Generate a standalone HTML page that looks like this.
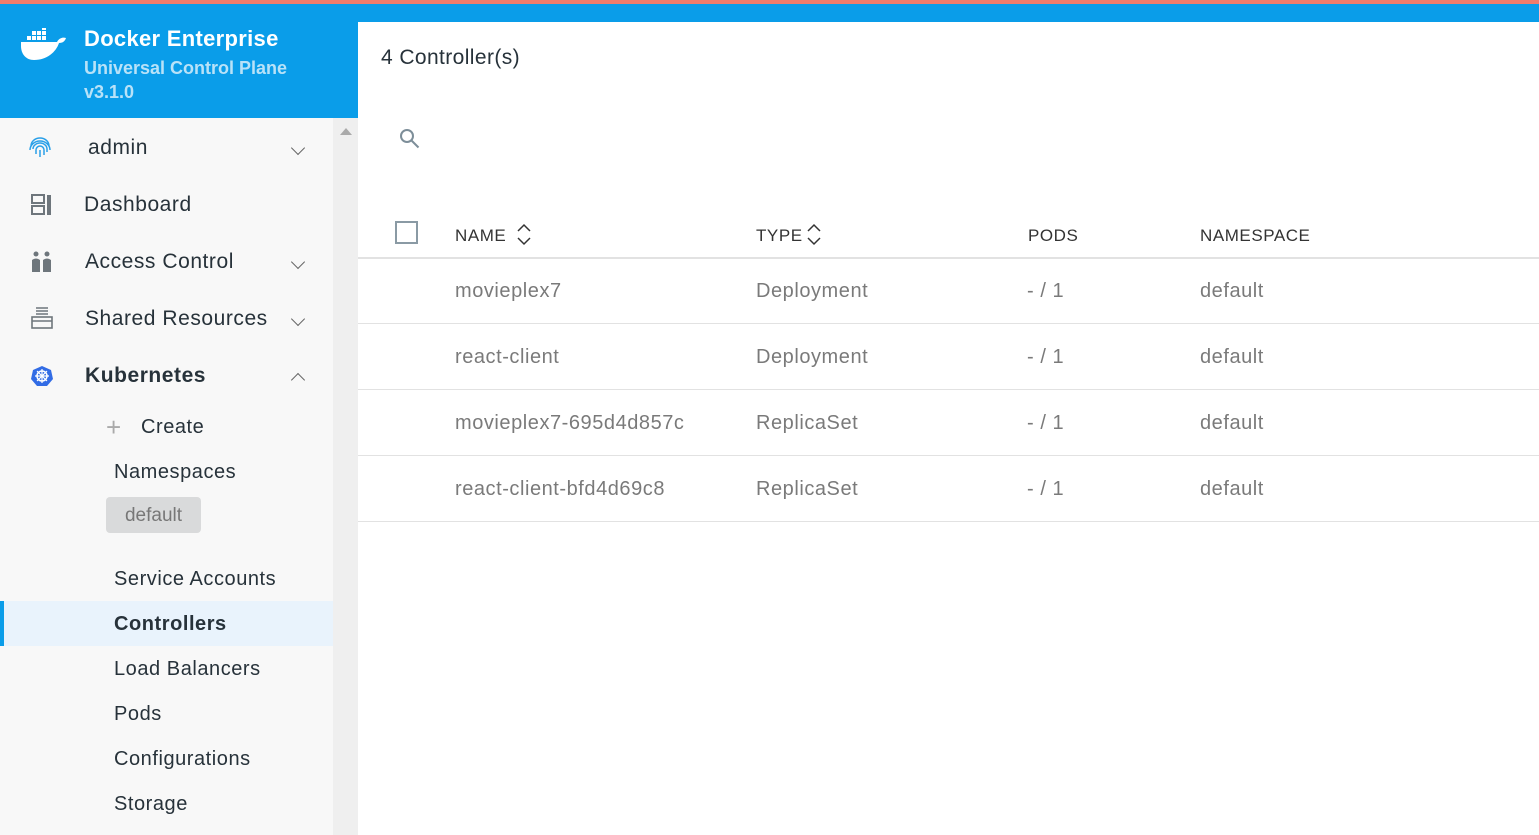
<!DOCTYPE html>
<html><head><meta charset="utf-8"><style>
*{margin:0;padding:0;box-sizing:border-box}
body{width:1539px;height:835px;overflow:hidden;background:#fff;font-family:"Liberation Sans","DejaVu Sans",sans-serif;position:relative;color:#27323a}
.a{position:absolute;white-space:nowrap}
.nav,.sub,.td,.th{margin-top:2px;letter-spacing:.55px}
.nav{font-size:21px;color:#27323a}
.sub{font-size:20px;color:#27323a}
.chev{position:absolute;width:10px;height:10px;border-right:1.5px solid #666;border-bottom:1.5px solid #666;transform:rotate(45deg)}
.th{font-size:17px;color:#333;top:224px}
.td{font-size:20px;color:#7a7a7a}
.row{position:absolute;left:358px;right:0;height:1px;background:#e2e2e2}
</style></head><body>
<div class="a" style="left:0;top:0;width:1539px;height:4px;background:#f07c6c"></div>
<div class="a" style="left:0;top:4px;width:1539px;height:18px;background:#0a9de9"></div>
<div class="a" style="left:0;top:4px;width:358px;height:114px;background:#0a9de9"></div>
<svg class="a" style="left:20px;top:28px" width="48" height="34" viewBox="0 0 48 34"><g fill="#fff"><rect x="7" y="8" width="4" height="4"/><rect x="12" y="8" width="4" height="4"/><rect x="17" y="8" width="4" height="4"/><rect x="22" y="8" width="4" height="4"/><rect x="12" y="3" width="4" height="4"/><rect x="17" y="3" width="4" height="4"/><rect x="22" y="3" width="4" height="4"/><rect x="22" y="0" width="4" height="2"/><path d="M1 14h36c2-4 6-5 9-4-1 3-3 5-7 5-3 9-12 17-25 17C6 32 1 26 1 18z"/></g></svg>
<div class="a" style="left:84px;top:26px;font-size:22px;font-weight:bold;color:#fff;letter-spacing:.3px">Docker Enterprise</div>
<div class="a" style="left:84px;top:58px;font-size:18px;font-weight:bold;color:#b8e2f8">Universal Control Plane</div>
<div class="a" style="left:84px;top:82px;font-size:18px;font-weight:bold;color:#b8e2f8">v3.1.0</div>
<div class="a" style="left:0;top:118px;width:333px;height:717px;background:#f8f8f8"></div>
<div class="a" style="left:333px;top:118px;width:25px;height:717px;background:#efefef"></div>
<div class="a" style="left:340px;top:128px;width:0;height:0;border-left:6px solid transparent;border-right:6px solid transparent;border-bottom:7px solid #aaa"></div>
<svg class="a" style="left:28px;top:137px" width="24" height="22" viewBox="0 0 24 22" fill="none" stroke="#2aa0e8" stroke-width="1.5"><path d="M3 9a9 8 0 0118 0M5 12a7 6 0 0114 0v3M8 17v-4a4 4 0 018 0v5M12 13v7M2 13a10 9 0 0120 0"/></svg>
<svg class="a" style="left:31px;top:194px" width="22" height="22" viewBox="0 0 22 22" fill="none" stroke="#6e767c" stroke-width="2"><rect x="1" y="1" width="12" height="8"/><rect x="1" y="12" width="12" height="8"/><path d="M18 1v20" stroke-width="4"/></svg>
<svg class="a" style="left:31px;top:251px" width="22" height="22" viewBox="0 0 22 22" fill="#6e767c"><circle cx="5" cy="3" r="2.5"/><circle cx="16" cy="3" r="2.5"/><path d="M1 9q4-3 8 0v12H1zM12 9q4-3 8 0v12h-8z"/></svg>
<svg class="a" style="left:31px;top:307px" width="22" height="22" viewBox="0 0 22 22" fill="none" stroke="#6e767c" stroke-width="1.6"><path d="M5 1h12M5 4h12M5 7h12"/><rect x="1" y="10" width="20" height="11"/><path d="M1 14h20"/></svg>
<svg class="a" style="left:31px;top:365px" width="22" height="22" viewBox="0 0 22 22"><path d="M11 1l9 4 2 9-6 7H6L0 14l2-9z" fill="#326ce5"/><circle cx="11" cy="11" r="5" fill="none" stroke="#fff" stroke-width="1.5"/><path d="M11 4v14M4 11h14M6 6l10 10M16 6L6 16" stroke="#fff" stroke-width="1.2"/></svg>
<div class="a nav" style="left:88px;top:134px">admin</div>
<div class="a nav" style="left:84px;top:191px">Dashboard</div>
<div class="a nav" style="left:85px;top:248px">Access Control</div>
<div class="a nav" style="left:85px;top:305px">Shared Resources</div>
<div class="a nav" style="left:85px;top:362px;font-weight:bold">Kubernetes</div>
<div class="chev" style="left:293px;top:143px"></div>
<div class="chev" style="left:293px;top:257px"></div>
<div class="chev" style="left:293px;top:314px"></div>
<div class="chev" style="left:293px;top:375px;transform:rotate(225deg)"></div>
<div class="a" style="left:106px;top:412px;font-size:26px;color:#aaa;font-weight:300">+</div>
<div class="a sub" style="left:141px;top:414px">Create</div>
<div class="a sub" style="left:114px;top:459px">Namespaces</div>
<div class="a" style="left:106px;top:497px;width:95px;height:36px;background:#d9dadb;border-radius:4px;font-size:19px;color:#777;text-align:center;line-height:38px">default</div>
<div class="a sub" style="left:114px;top:566px">Service Accounts</div>
<div class="a" style="left:0;top:601px;width:333px;height:45px;background:#e9f3fc"></div>
<div class="a" style="left:0;top:601px;width:4px;height:45px;background:#0a9de9"></div>
<div class="a sub" style="left:114px;top:611px;font-weight:bold">Controllers</div>
<div class="a sub" style="left:114px;top:656px">Load Balancers</div>
<div class="a sub" style="left:114px;top:701px">Pods</div>
<div class="a sub" style="left:114px;top:746px">Configurations</div>
<div class="a sub" style="left:114px;top:791px">Storage</div>
<div class="a" style="left:381px;top:46px;font-size:21px;color:#27323a;letter-spacing:.4px">4 Controller(s)</div>
<svg class="a" style="left:399px;top:128px" width="22" height="22" viewBox="0 0 22 22" fill="none" stroke="#7d8e99" stroke-width="2"><circle cx="8" cy="8" r="6"/><path d="M12.5 12.5l7 7"/></svg>
<div class="a" style="left:395px;top:221px;width:23px;height:23px;border:2px solid #8a9aa4"></div>
<div class="a th" style="left:455px">NAME</div>
<div class="a th" style="left:756px">TYPE</div>
<div class="a th" style="left:1028px">PODS</div>
<div class="a th" style="left:1200px">NAMESPACE</div>
<svg class="a" style="left:516px;top:222px" width="16" height="24" viewBox="0 0 16 24" fill="none" stroke="#333" stroke-width="1.5"><path d="M2 9l6-6 6 6M2 16l6 6 6-6"/></svg>
<svg class="a" style="left:806px;top:222px" width="16" height="24" viewBox="0 0 16 24" fill="none" stroke="#333" stroke-width="1.5"><path d="M2 9l6-6 6 6M2 16l6 6 6-6"/></svg>
<div class="row" style="top:257px;height:2px"></div>
<div class="a td" style="left:455px;top:278px">movieplex7</div><div class="a td" style="left:756px;top:278px">Deployment</div><div class="a td" style="left:1027px;top:278px">- / 1</div><div class="a td" style="left:1200px;top:278px">default</div>
<div class="row" style="top:323px"></div>
<div class="a td" style="left:455px;top:344px">react-client</div><div class="a td" style="left:756px;top:344px">Deployment</div><div class="a td" style="left:1027px;top:344px">- / 1</div><div class="a td" style="left:1200px;top:344px">default</div>
<div class="row" style="top:389px"></div>
<div class="a td" style="left:455px;top:410px">movieplex7-695d4d857c</div><div class="a td" style="left:756px;top:410px">ReplicaSet</div><div class="a td" style="left:1027px;top:410px">- / 1</div><div class="a td" style="left:1200px;top:410px">default</div>
<div class="row" style="top:455px"></div>
<div class="a td" style="left:455px;top:476px">react-client-bfd4d69c8</div><div class="a td" style="left:756px;top:476px">ReplicaSet</div><div class="a td" style="left:1027px;top:476px">- / 1</div><div class="a td" style="left:1200px;top:476px">default</div>
<div class="row" style="top:521px"></div>
</body></html>
